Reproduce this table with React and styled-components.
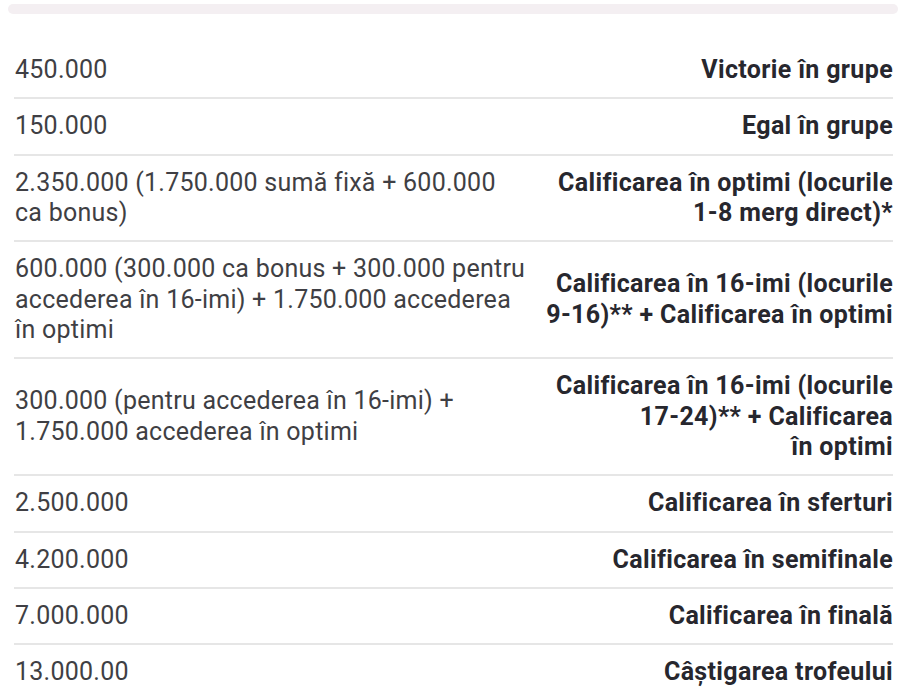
import React from "react";
import styled, { createGlobalStyle } from "styled-components";

const Global = createGlobalStyle`
  html, body { margin: 0; padding: 0; background: #ffffff; }
  body { font-family: Roboto, "Liberation Sans", Arial, sans-serif; }
`;

const Page = styled.div`
  padding: 4px 2px 0 8px;
  width: 900px;
  box-sizing: border-box;
`;

const TopBar = styled.div`
  height: 10px;
  border-radius: 5px;
  background: #f4eff2;
`;

const Table = styled.div`
  margin: 29px 5px 0 6px;
  display: flex;
  flex-direction: column;
`;

const Row = styled.div`
  display: grid;
  grid-template-columns: 1fr auto;
  align-items: center;
  column-gap: 20px;
  padding: 12px 0 12px 1px;
  border-bottom: ${(p) => (p.$last ? "none" : "2px solid #e6e6e6")};
`;

const Amount = styled.div`
  font-size: 25px;
  line-height: 30.33px;
  color: #3f3f44;
  letter-spacing: 0.25px;
  white-space: nowrap;
`;

const Stage = styled.div`
  font-size: 25px;
  line-height: 30.33px;
  font-weight: 700;
  color: #27272e;
  text-align: right;
  letter-spacing: 0.35px;
  white-space: nowrap;
`;

const rows = [
  { a: ["450.000"], s: ["Victorie în grupe"] },
  { a: ["150.000"], s: ["Egal în grupe"] },
  {
    a: ["2.350.000 (1.750.000 sumă fixă + 600.000", "ca bonus)"],
    s: ["Calificarea în optimi (locurile", "1-8 merg direct)*"],
  },
  {
    a: [
      "600.000 (300.000 ca bonus + 300.000 pentru",
      "accederea în 16-imi) + 1.750.000 accederea",
      "în optimi",
    ],
    s: ["Calificarea în 16-imi (locurile", "9-16)** + Calificarea în optimi"],
  },
  {
    a: ["300.000 (pentru accederea în 16-imi) +", "1.750.000 accederea în optimi"],
    s: ["Calificarea în 16-imi (locurile", "17-24)** + Calificarea", "în optimi"],
  },
  { a: ["2.500.000"], s: ["Calificarea în sferturi"] },
  { a: ["4.200.000"], s: ["Calificarea în semifinale"] },
  { a: ["7.000.000"], s: ["Calificarea în finală"] },
  { a: ["13.000.00"], s: ["Câștigarea trofeului"] },
];

const Lines = ({ items }) =>
  items.map((t, i) => (
    <React.Fragment key={i}>
      {i > 0 && <br />}
      {t}
    </React.Fragment>
  ));

export default function App() {
  return (
    <>
      <Global />
      <Page>
        <TopBar />
        <Table>
          {rows.map((r, i) => (
            <Row key={i} $last={i === rows.length - 1}>
              <Amount>
                <Lines items={r.a} />
              </Amount>
              <Stage>
                <Lines items={r.s} />
              </Stage>
            </Row>
          ))}
        </Table>
      </Page>
    </>
  );
}
